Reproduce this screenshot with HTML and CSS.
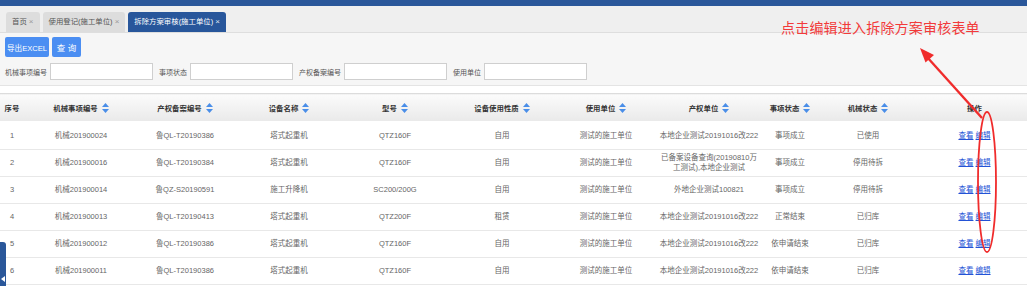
FILE: index.html
```html
<!DOCTYPE html>
<html>
<head>
    <meta charset="utf-8">
    <link rel="stylesheet" href="styles.css">
</head>
<body>
<div class="page">
    <div class="topbar"></div>

    <div class="tabs">
        <div class="tab">首页 <span class="tab-close">×</span></div>
        <div class="tab">使用登记(施工单位) <span class="tab-close">×</span></div>
        <div class="tab tab-active">拆除方案审核(施工单位) <span class="tab-close">×</span></div>
    </div>

    <div class="toolbar">
        <div class="toolbar-buttons">
            <button class="btn">导出EXCEL</button>
            <button class="btn btn-query">查 询</button>
        </div>
        <div class="search-row">
            <label class="search-label">机械事项编号</label>
            <input class="search-input" type="text">
            <label class="search-label">事项状态</label>
            <input class="search-input" type="text">
            <label class="search-label">产权备案编号</label>
            <input class="search-input" type="text">
            <label class="search-label">使用单位</label>
            <input class="search-input" type="text">
        </div>
    </div>

    <table class="grid">
        <colgroup>
            <col class="c-no">
            <col class="c-code">
            <col class="c-rec">
            <col class="c-name">
            <col class="c-model">
            <col class="c-use">
            <col class="c-unit">
            <col class="c-owner">
            <col class="c-state">
            <col class="c-mstate">
            <col class="c-op">
        </colgroup>
        <thead>
        <tr>
            <th>序号</th>
            <th class="sortable">机械事项编号</th>
            <th class="sortable">产权备案编号</th>
            <th class="sortable">设备名称</th>
            <th class="sortable">型号</th>
            <th class="sortable">设备使用性质</th>
            <th class="sortable">使用单位</th>
            <th class="sortable">产权单位</th>
            <th class="sortable">事项状态</th>
            <th class="sortable">机械状态</th>
            <th>操作</th>
        </tr>
        </thead>
        <tbody id="rows"></tbody>
    </table>

    <div class="side-handle"><span class="side-handle-arrow"></span></div>

    <div class="note">点击编辑进入拆除方案审核表单</div>
    <svg class="note-mark" width="1027" height="286" viewBox="0 0 1027 286">
        <line x1="982" y1="118" x2="927" y2="57" stroke="#f02c2c" stroke-width="2.4"/>
        <polygon points="920,48 925.5,62.5 934,55" fill="#f02c2c"/>
        <ellipse cx="987" cy="182" rx="9" ry="70" fill="none" stroke="#f02c2c" stroke-width="1.8"/>
    </svg>
</div>

<script type="text/javascript">
    const rows = [
        ['1', '机械201900024', '鲁QL-T20190386', '塔式起重机', 'QTZ160F', '自用', '测试的施工单位', '本地企业测试20191016改222', '事项成立', '已使用'],
        ['2', '机械201900016', '鲁QL-T20190384', '塔式起重机', 'QTZ160F', '自用', '测试的施工单位', '已备案设备查询(20190810万工测试),本地企业测试', '事项成立', '停用待拆'],
        ['3', '机械201900014', '鲁QZ-S20190591', '施工升降机', 'SC200/200G', '自用', '测试的施工单位', '外地企业测试100821', '事项成立', '停用待拆'],
        ['4', '机械201900013', '鲁QL-T20190413', '塔式起重机', 'QTZ200F', '租赁', '测试的施工单位', '本地企业测试20191016改222', '正常结束', '已归库'],
        ['5', '机械201900012', '鲁QL-T20190386', '塔式起重机', 'QTZ160F', '自用', '测试的施工单位', '本地企业测试20191016改222', '依申请结束', '已归库'],
        ['6', '机械201900011', '鲁QL-T20190386', '塔式起重机', 'QTZ160F', '自用', '测试的施工单位', '本地企业测试20191016改222', '依申请结束', '已归库']
    ];

    const sortIcon = '<svg class="sort-icon" width="7" height="10" viewBox="0 0 7 10">' +
        '<polygon points="3.5,0 7,4 0,4" fill="#4a8ee8"/>' +
        '<polygon points="0,6 7,6 3.5,10" fill="#4a8ee8"/></svg>';

    document.querySelectorAll('th.sortable').forEach((th) => {
        th.innerHTML = '<span class="th-inner">' + th.textContent + sortIcon + '</span>';
    });

    const tbody = document.getElementById('rows');
    rows.forEach((row) => {
        const tr = document.createElement('tr');
        row.forEach((value) => {
            const td = document.createElement('td');
            td.textContent = value;
            tr.appendChild(td);
        });
        const op = document.createElement('td');
        op.innerHTML = '<a class="op-link" href="#">查看</a> <a class="op-link" href="#">编辑</a>';
        tr.appendChild(op);
        tbody.appendChild(tr);
    });
</script>
</body>
</html>
```

FILE: styles.css
```css
/* Page base */
html, body {
    margin: 0;
    padding: 0;
    background: #fff;
}

body {
    font-family: "Liberation Sans", "Noto Sans CJK SC", sans-serif;
    font-size: 7.5px;
    color: #555;
}

.page {
    position: relative;
    width: 1027px;
    height: 286px;
    overflow: hidden;
}

/* Top blue strip */
.topbar {
    height: 6px;
    background: #2a579a;
}

/* Tab strip */
.tabs {
    display: flex;
    align-items: flex-end;
    gap: 3px;
    height: 26px;
    padding-left: 6px;
    background: #efefef;
    border-bottom: 1px solid #dedede;
}

.tab {
    height: 20px;
    line-height: 20px;
    padding: 0 6px;
    background: #dddddd;
    color: #555;
    font-size: 7.4px;
    border-radius: 3px 3px 0 0;
}

.tab-close {
    color: #999;
    font-size: 8px;
}

.tab-active {
    background: #28569b;
    color: #fff;
}

.tab-active .tab-close {
    color: #dfe6f2;
}

/* Toolbar and search */
.toolbar {
    background: #f6f6f6;
    padding: 4px 5px 5px;
    border-bottom: 1px solid #e4e4e4;
}

.toolbar-buttons {
    display: flex;
    gap: 3px;
}

.btn {
    height: 20px;
    padding: 0;
    border: none;
    border-radius: 2px;
    background: #4b8ef2;
    color: #fff;
    font-family: "Liberation Sans", "Noto Sans CJK SC", sans-serif;
    font-size: 7.6px;
    white-space: nowrap;
    width: 44px;
}

.btn-query {
    width: 29px;
    font-size: 8.5px;
}

.search-row {
    display: flex;
    align-items: center;
    margin-top: 6px;
    height: 17px;
}

.search-label {
    font-size: 7px;
    color: #555;
    margin-right: 3px;
}

.search-input {
    width: 103px;
    height: 17px;
    box-sizing: border-box;
    border: 1px solid #cfcfcf;
    background: #fff;
    margin: 0 6px 0 0;
    padding: 0;
}

/* Data grid */
.grid {
    margin-top: 7px;
    width: 1027px;
    table-layout: fixed;
    border-collapse: collapse;
}

.c-no { width: 24px; }
.c-code { width: 114px; }
.c-rec { width: 94px; }
.c-name { width: 114px; }
.c-model { width: 98px; }
.c-use { width: 116px; }
.c-unit { width: 92px; }
.c-owner { width: 114px; }
.c-state { width: 48px; }
.c-mstate { width: 108px; }
.c-op { width: 105px; }

.grid th {
    height: 27px;
    padding: 0;
    text-align: center;
    font-weight: bold;
    color: #333;
    font-size: 7.4px;
    white-space: nowrap;
    background: linear-gradient(#fbfbfb, #e9e9e9);
    border-top: 1px solid #dcdcdc;
}

.th-inner {
    display: inline-flex;
    align-items: center;
    gap: 4px;
}

.sort-icon {
    display: block;
}

.grid td {
    height: 26px;
    padding: 0 1px;
    text-align: center;
    line-height: 10px;
    color: #666;
    white-space: nowrap;
    border-bottom: 1px solid #e8e8e8;
}

.grid tbody tr:first-child td {
    padding-top: 2px;
}

.grid td:nth-child(8) {
    padding-left: 7px;
    padding-right: 7px;
    white-space: normal;
}

.op-link {
    color: #2352d6;
    text-decoration: underline;
}

/* Collapsed side menu handle */
.side-handle {
    position: absolute;
    left: 0;
    top: 242px;
    width: 6px;
    height: 44px;
    background: #2a579a;
    border-radius: 0 3px 0 0;
}

.side-handle-arrow {
    position: absolute;
    left: 1px;
    top: 34px;
    width: 0;
    height: 0;
    border-top: 3px solid transparent;
    border-bottom: 3px solid transparent;
    border-right: 4px solid #fff;
}

/* Red annotation */
.note {
    position: absolute;
    left: 781px;
    top: 17px;
    font-size: 14px;
    letter-spacing: 0.2px;
    color: #f23a3a;
    font-family: "Noto Sans CJK SC", sans-serif;
}

.note-mark {
    position: absolute;
    left: 0;
    top: 0;
    pointer-events: none;
}
```
